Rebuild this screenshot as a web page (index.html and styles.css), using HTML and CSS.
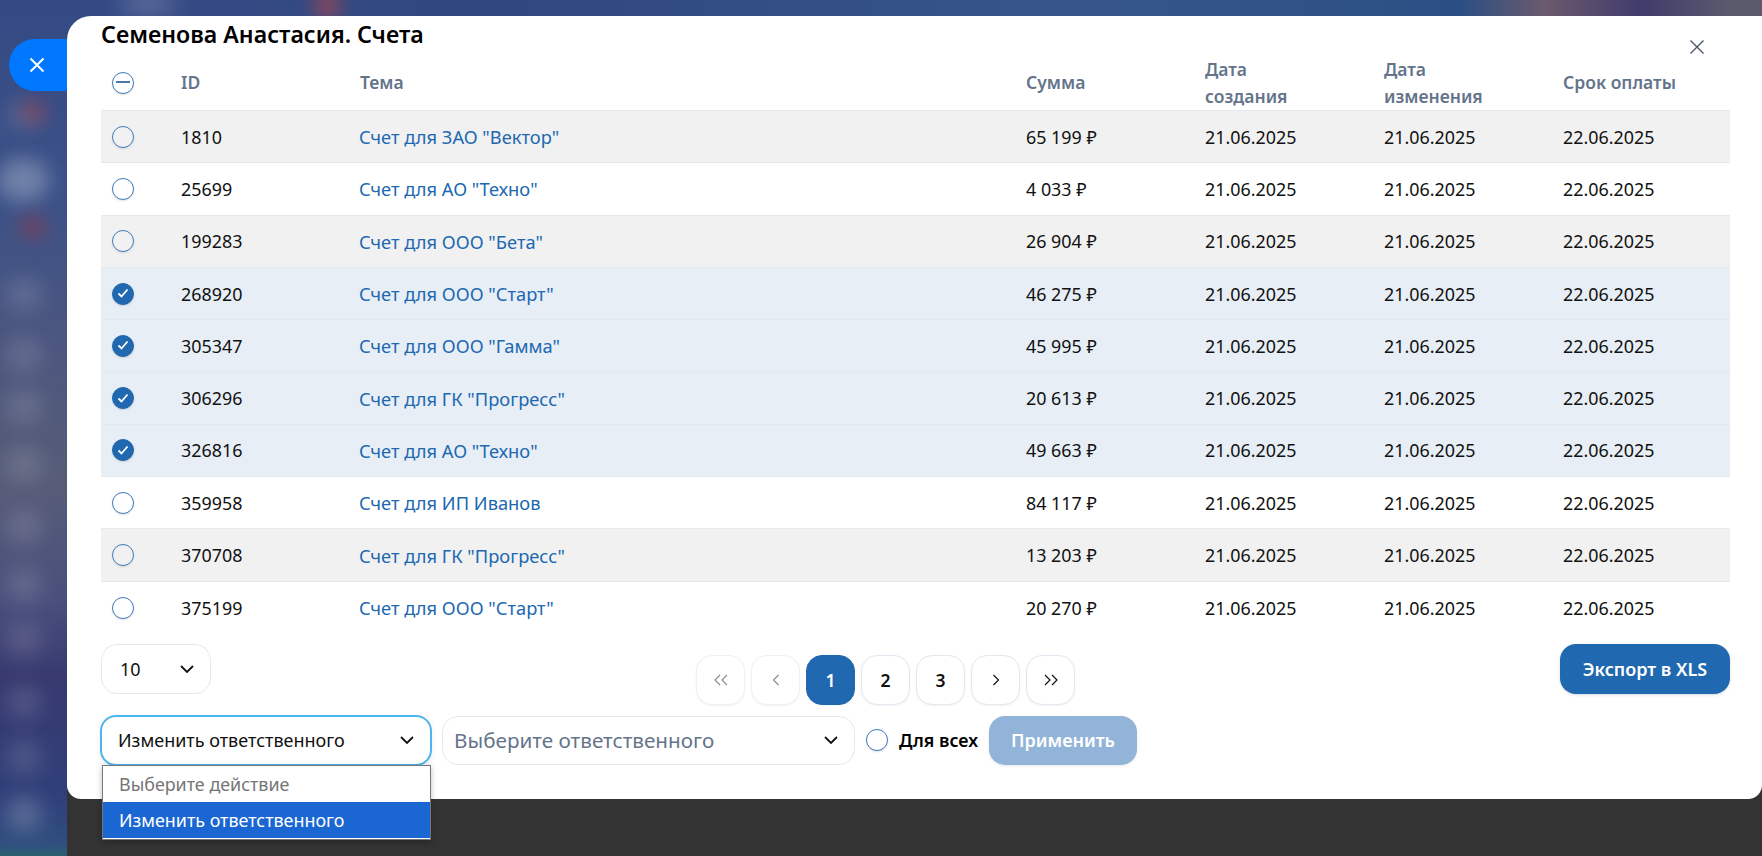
FILE: index.html
```html
<!DOCTYPE html>
<html lang="ru">
<head>
<meta charset="utf-8">
<title>Семенова Анастасия. Счета</title>
<link rel="stylesheet" href="styles.css">
</head>
<body>
<div class="backdrop" aria-hidden="true">
  <span class="blob b1"></span><span class="blob b2"></span><span class="blob b3"></span><span class="blob b4"></span>
  <span class="blob b5"></span><span class="blob b6"></span><span class="blob b7"></span><span class="blob b8"></span>
  <span class="blob b9"></span><span class="blob b10"></span><span class="blob b11"></span><span class="blob b12"></span>
  <span class="blob b13"></span><span class="blob b14"></span><span class="blob b15"></span><span class="blob b16"></span>
</div>
<div class="dark-strip"></div>
<button class="side-close"><svg width="18" height="18" viewBox="0 0 18 18"><path d="M2.500 2.500l13 13M15.500 2.500l-13 13" stroke="#fff" stroke-width="2" fill="none"/></svg></button>
<main class="modal">
  <h1 class="title">Семенова Анастасия. Счета</h1>
  <button class="modal-close"><svg width="14" height="14" viewBox="0 0 14 14"><path d="M.5.5l13 13M13.500.5l-13 13" stroke="#4a5565" stroke-width="1.400" fill="none"/></svg></button>
  <div class="table">
    <div class="row head">
      <div class="cell"><span class="check minus"></span></div>
      <div class="cell">ID</div><div class="cell">Тема</div><div class="cell">Сумма</div>
      <div class="cell">Дата<br>создания</div><div class="cell">Дата<br>изменения</div><div class="cell">Срок оплаты</div>
    </div>
    <div class="row odd"><div class="cell"><span class="check"></span></div><div class="cell">1810</div><div class="cell link">Счет для ЗАО "Вектор"</div><div class="cell">65 199 ₽</div><div class="cell">21.06.2025</div><div class="cell">21.06.2025</div><div class="cell">22.06.2025</div></div>
    <div class="row"><div class="cell"><span class="check"></span></div><div class="cell">25699</div><div class="cell link">Счет для АО "Техно"</div><div class="cell">4 033 ₽</div><div class="cell">21.06.2025</div><div class="cell">21.06.2025</div><div class="cell">22.06.2025</div></div>
    <div class="row odd"><div class="cell"><span class="check"></span></div><div class="cell">199283</div><div class="cell link">Счет для ООО "Бета"</div><div class="cell">26 904 ₽</div><div class="cell">21.06.2025</div><div class="cell">21.06.2025</div><div class="cell">22.06.2025</div></div>
    <div class="row selected"><div class="cell"><span class="check on"><svg viewBox="0 0 22 22"><path d="M6.500 11.500l3 3 6-7" stroke="#fff" stroke-width="1.800" fill="none"/></svg></span></div><div class="cell">268920</div><div class="cell link">Счет для ООО "Старт"</div><div class="cell">46 275 ₽</div><div class="cell">21.06.2025</div><div class="cell">21.06.2025</div><div class="cell">22.06.2025</div></div>
    <div class="row selected"><div class="cell"><span class="check on"><svg viewBox="0 0 22 22"><path d="M6.500 11.500l3 3 6-7" stroke="#fff" stroke-width="1.800" fill="none"/></svg></span></div><div class="cell">305347</div><div class="cell link">Счет для ООО "Гамма"</div><div class="cell">45 995 ₽</div><div class="cell">21.06.2025</div><div class="cell">21.06.2025</div><div class="cell">22.06.2025</div></div>
    <div class="row selected"><div class="cell"><span class="check on"><svg viewBox="0 0 22 22"><path d="M6.500 11.500l3 3 6-7" stroke="#fff" stroke-width="1.800" fill="none"/></svg></span></div><div class="cell">306296</div><div class="cell link">Счет для ГК "Прогресс"</div><div class="cell">20 613 ₽</div><div class="cell">21.06.2025</div><div class="cell">21.06.2025</div><div class="cell">22.06.2025</div></div>
    <div class="row selected"><div class="cell"><span class="check on"><svg viewBox="0 0 22 22"><path d="M6.500 11.500l3 3 6-7" stroke="#fff" stroke-width="1.800" fill="none"/></svg></span></div><div class="cell">326816</div><div class="cell link">Счет для АО "Техно"</div><div class="cell">49 663 ₽</div><div class="cell">21.06.2025</div><div class="cell">21.06.2025</div><div class="cell">22.06.2025</div></div>
    <div class="row"><div class="cell"><span class="check"></span></div><div class="cell">359958</div><div class="cell link">Счет для ИП Иванов</div><div class="cell">84 117 ₽</div><div class="cell">21.06.2025</div><div class="cell">21.06.2025</div><div class="cell">22.06.2025</div></div>
    <div class="row odd"><div class="cell"><span class="check"></span></div><div class="cell">370708</div><div class="cell link">Счет для ГК "Прогресс"</div><div class="cell">13 203 ₽</div><div class="cell">21.06.2025</div><div class="cell">21.06.2025</div><div class="cell">22.06.2025</div></div>
    <div class="row last"><div class="cell"><span class="check"></span></div><div class="cell">375199</div><div class="cell link">Счет для ООО "Старт"</div><div class="cell">20 270 ₽</div><div class="cell">21.06.2025</div><div class="cell">21.06.2025</div><div class="cell">22.06.2025</div></div>
  </div>
  <div class="pager-row">
    <div class="select size"><span>10</span><svg class="chev" width="14" height="8" viewBox="0 0 14 8"><path d="M1 1l6 6 6-6" stroke="#111" stroke-width="1.800" fill="none"/></svg></div>
    <nav class="pager">
      <span class="pg off"><svg width="16" height="12" viewBox="0 0 16 12"><path d="M7 1L2 6l5 5M14 1L9 6l5 5" stroke="currentColor" stroke-width="1.200" fill="none"/></svg></span>
      <span class="pg off"><svg width="8" height="12" viewBox="0 0 8 12"><path d="M6.500 1l-5 5 5 5" stroke="currentColor" stroke-width="1.200" fill="none"/></svg></span>
      <span class="pg cur">1</span><span class="pg">2</span><span class="pg">3</span>
      <span class="pg"><svg width="8" height="12" viewBox="0 0 8 12"><path d="M1.500 1l5 5-5 5" stroke="currentColor" stroke-width="1.200" fill="none"/></svg></span>
      <span class="pg"><svg width="16" height="12" viewBox="0 0 16 12"><path d="M2 1l5 5-5 5M9 1l5 5-5 5" stroke="currentColor" stroke-width="1.200" fill="none"/></svg></span>
    </nav>
    <button class="btn export">Экспорт в XLS</button>
  </div>
  <div class="action-row">
    <div class="action-wrap">
      <div class="select action"><span>Изменить ответственного</span><svg class="chev" width="14" height="8" viewBox="0 0 14 8"><path d="M1 1l6 6 6-6" stroke="#111" stroke-width="1.800" fill="none"/></svg></div>
      <ul class="menu"><li class="muted">Выберите действие</li><li class="active">Изменить ответственного</li></ul>
    </div>
    <div class="select person"><span>Выберите ответственного</span><svg class="chev" width="14" height="8" viewBox="0 0 14 8"><path d="M1 1l6 6 6-6" stroke="#111" stroke-width="1.800" fill="none"/></svg></div>
    <label class="all"><span class="check"></span><b>Для всех</b></label>
    <button class="btn apply">Применить</button>
  </div>
</main>
</body>
</html>
```
FILE: styles.css
```css
* { box-sizing: border-box; }
html, body { margin: 0; height: 100%; }
body {
  position: relative;
  width: 1762px;
  height: 856px;
  overflow: hidden;
  font-family: "Noto Sans", "Open Sans", sans-serif;
  color: #111;
  background: #34497f;
}
.backdrop {
  position: absolute;
  inset: 0;
  overflow: hidden;
  background:
    linear-gradient(90deg, rgba(48,72,126,0) 0 200px, #30487e 500px, #36568a 1100px, #2b4f84 1460px, #6b5a6c 1545px, #403c6c 1640px, #5a5a6c 1730px),
    linear-gradient(180deg, #354a84 0, #3b5288 200px, #4a5580 320px, #575d78 480px, #4a4f7c 600px, #37396f 680px, #30407a 800px, #2f4f7f 845px, #2a6070 856px);
}
.blob { position: absolute; border-radius: 50%; filter: blur(10px); width: 36px; height: 36px; background: rgba(255,255,255,.13); left: 6px; }
.b1 { top: 102px; height: 28px; }
.b2 { top: 158px; width: 52px; height: 44px; left: -3px; background: rgba(255,255,255,.28); }
.b3 { top: 277px; } .b4 { top: 337px; } .b5 { top: 389px; } .b6 { top: 446px; }
.b7 { top: 509px; } .b8 { top: 567px; } .b9 { top: 621px; } .b10 { top: 684px; } .b11 { top: 739px; }
.b12 { top: 796px; background: rgba(255,255,255,.2); }
.b13 { top: 102px; left: 22px; width: 22px; height: 20px; background: rgba(170,50,55,.7); }
.b14 { top: 217px; left: 22px; width: 22px; height: 20px; background: rgba(170,50,55,.7); }
.b15 { top: -10px; left: 316px; width: 22px; height: 30px; background: rgba(190,70,70,.8); }
.b16 { top: -12px; left: 120px; width: 56px; height: 30px; background: rgba(255,255,255,.16); }
.dark-strip { position: absolute; left: 67px; right: 0; top: 780px; bottom: 0; background: #333; }
.side-close {
  position: absolute; left: 9px; top: 39px; width: 80px; height: 52px;
  border: 0; border-radius: 26px; background: #0077ff;
  display: flex; align-items: center; padding: 0 0 0 19px;
}
.modal {
  position: absolute; left: 67px; top: 16px; width: 1695px; height: 783px;
  background: #fff; border-radius: 24px 0 14px 14px;
  padding: 0 32px 0 34px;
}
.title { margin: 0; font-size: 23.200px; font-weight: 600; line-height: 36px; height: 39px; color: #000; }
.modal-close { position: absolute; top: 24px; right: 58px; padding: 0; border: 0; background: none; width: 14px; height: 14px; display: flex; }
.table { width: 1629px; font-size: 17.900px; }
.row {
  display: grid;
  grid-template-columns: 69px 179px 666px 179px 179px 179px 178px;
  height: 52.300px;
  align-items: center;
  border-bottom: 1px solid #e4e9f0;
}
.row.head { height: 56px; font-weight: 600; font-size: 17.500px; color: #64748b; line-height: 27px; border-bottom: 1.500px solid #e2e8f0; }
.row.odd { background: #f1f1f2; }
.row.selected { background: #e7eef6; }
.row.last { border-bottom: 0; }
.cell { padding-left: 11px; }
.link { color: #2068b0; font-size: 18.300px; margin-left: -1px; }
.check {
  display: block; width: 22px; height: 22px; border-radius: 50%;
  border: 1.500px solid #3f7bbd; background: #fff; box-shadow: 0 1px 2px rgba(0,0,0,.12);
  position: relative; flex: none;
}
.odd .check { background: transparent; }
.check.minus { background: #fff; }
.check.minus::after { content: ""; position: absolute; left: 3px; right: 3px; top: 8.500px; height: 1.500px; background: #4a78ad; }
.check.on { background: #2068b0; border-color: #2068b0; }
.check.on svg { position: absolute; left: -1.500px; top: -1.500px; width: 22px; height: 22px; }
.pager-row { position: relative; display: flex; justify-content: space-between; margin-top: 10px; height: 71px; }
.select {
  display: flex; align-items: center; justify-content: space-between;
  border: 1px solid #e2e8f0; border-radius: 16px; background: #fff;
  font-size: 18px; height: 50px; padding: 0 16px 0 18px;
}
.size { width: 110px; }
.pager { position: absolute; left: 595px; top: 11px; display: flex; gap: 6px; }
.pg {
  width: 49px; height: 50px; border: 1px solid #e2e8f0; border-radius: 16px;
  display: flex; align-items: center; justify-content: center;
  font-size: 17.500px; font-weight: 600; color: #111; background: #fff; box-shadow: 0 1px 2px rgba(0,0,0,.05);
}
.pg.off { color: #8a8f98; border-color: #eef1f5; }
.pg.cur { background: #2068b0; border-color: #2068b0; color: #fff; }
.btn { border: 0; border-radius: 16px; color: #fff; font-family: inherit; font-weight: 600; font-size: 18px; padding: 0; }
.export { width: 170px; height: 50px; background: #2068b0; box-shadow: 0 1px 3px rgba(0,0,0,.15); }
.action-row { display: flex; align-items: flex-start; gap: 10px; margin-top: 1px; }
.action-wrap { position: relative; width: 332px; margin-left: -1px; margin-top: -1px; }
.action { height: 51px; border: 2px solid #4cb5ee; width: 332px; box-shadow: 0 2px 6px rgba(0,0,0,.08); padding-left: 16px; }
.person { width: 413px; height: 49px; color: #64748b; font-size: 20.700px; padding-left: 11px; }
.menu {
  position: absolute; left: 2px; top: 50px; width: 329px; margin: 0; padding: 0; list-style: none;
  background: #fff; border: 1px solid #767676; box-shadow: 0 2px 6px rgba(0,0,0,.25); z-index: 3;
  font-size: 17.900px;
}
.menu li { height: 36.500px; line-height: 36px; padding-left: 16px; }
.menu .muted { color: #757575; }
.menu .active { background: #1a67d3; color: #fff; border-bottom: 1px solid #fff; }
.all { display: flex; align-items: center; gap: 11px; font-size: 17.800px; width: 113px; height: 49px; margin-left: 1px; }
.all b { font-weight: 600; color: #000; white-space: nowrap; }
.apply { width: 148px; height: 49px; background: #91b4d8; box-shadow: 0 1px 3px rgba(0,0,0,.1); }
```
